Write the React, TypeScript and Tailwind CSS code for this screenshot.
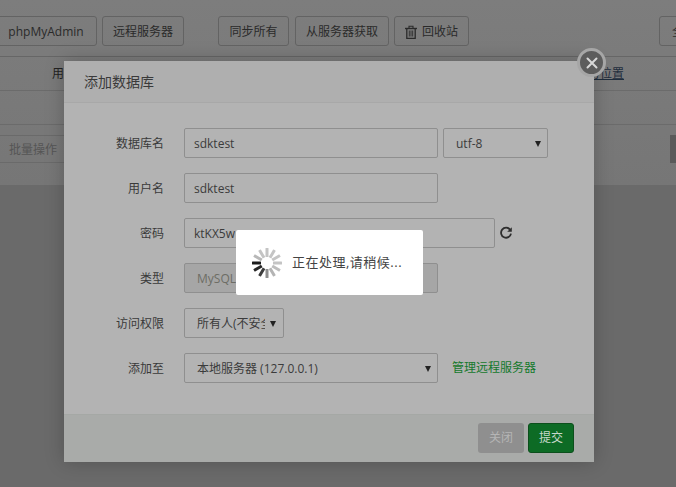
const font = { fontFamily: '"Open Sans", "Noto Sans CJK SC", sans-serif' };

const toolBtn =
  "flex h-[30px] shrink-0 items-center justify-center rounded-[3px] border border-[#636363] pt-px text-xs text-[#2a2a2a]";
const field =
  "flex h-[30px] items-center rounded-[2px] border border-[#8f8f8f] px-[9px] pt-px text-xs text-[#3b3b3b]";

function Caret({ className = "right-[6px]" }: { className?: string }) {
  return (
    <span className={`absolute top-[12px] h-0 w-0 border-x-[3.5px] border-t-[6px] border-x-transparent border-t-[#222] ${className}`} />
  );
}

function FormRow({ label, children }: { label: string; children: React.ReactNode }) {
  return (
    <div className="flex h-[30px] items-center">
      <label className="w-[100px] shrink-0 pt-[2px] text-right text-xs text-[#3a3a3a]">{label}</label>
      <div className="ml-[20px] flex items-center">{children}</div>
    </div>
  );
}

function TrashIcon() {
  return (
    <svg width="12" height="14" viewBox="0 0 12 14" className="shrink-0" fill="none" stroke="#2a2a2a">
      <path d="M0 3.5h12" strokeWidth="1.4" />
      <path d="M4 3V1.2h4V3" strokeWidth="1.1" />
      <path d="M1.8 3.5v9.8h8.4V3.5" strokeWidth="1.3" />
      <path d="M4.3 5.5v6M6 5.5v6M7.7 5.5v6" strokeWidth="0.9" />
    </svg>
  );
}

function RefreshIcon() {
  return (
    <svg width="14" height="14" viewBox="0 0 14 14" className="ml-[4px] shrink-0" fill="none">
      <path d="M11 3.6A5 5 0 1 0 12 7.6" stroke="#2e2e2e" strokeWidth="1.8" />
      <path d="M12.8 1.2v4.6H8.2z" fill="#2e2e2e" />
    </svg>
  );
}

function Spinner() {
  const colors = ["#1c1c1c", "#b8b8b8", "#c4c4c4", "#c4c4c4", "#c4c4c4", "#c4c4c4", "#c4c4c4", "#bdbdbd", "#b4b4b4", "#8e8e8e", "#3d3d3d", "#262626"];
  return (
    <svg width="32" height="32" viewBox="0 0 32 32" className="shrink-0">
      {colors.map((c, i) => (
        <rect key={i} x="1" y="14.5" width="9" height="3" rx="0.5" fill={c} transform={`rotate(${i * 30} 16 16)`} />
      ))}
    </svg>
  );
}

export default function App() {
  return (
    <div style={font} className="relative h-[487px] w-[676px] overflow-hidden bg-[#6a6a6a]">
      {/* page behind the dialog */}
      <div className="bg-gradient-to-b from-[#7d7d7d] to-[#767676]">
        <div className="flex h-[57px] items-start border-b border-[#666] pt-[16px]">
          <div className={`${toolBtn} ml-[-5px] w-[102px]`}>phpMyAdmin</div>
          <div className={`${toolBtn} ml-[5px] w-[82px]`}>远程服务器</div>
          <div className="ml-[18px] mt-[8px] h-[14px] w-px bg-[#6e6e6e]" />
          <div className={`${toolBtn} ml-[16px] w-[71px]`}>同步所有</div>
          <div className={`${toolBtn} ml-[6px] w-[94px]`}>从服务器获取</div>
          <div className={`${toolBtn} ml-[5px] w-[75px] gap-[5px]`}>
            <TrashIcon />
            回收站
          </div>
          <div className={`${toolBtn} ml-[190px] w-[40px] justify-start pl-[12px]`}>全</div>
        </div>
        <div className="flex h-[34px] items-center justify-between border-b border-[#6b6b6b] pl-[52px] pr-[52px] pt-px text-xs text-[#222]">
          <span>用</span>
          <span className="text-[#1f2d3d] underline">备份位置</span>
        </div>
        <div className="h-[34px] border-b border-[#6b6b6b]" />
        <div className="flex h-[60px] justify-between pt-[10px]">
          <div className="ml-[-4px] flex h-[28px] w-[80px] items-center rounded-[2px] border border-[#6a6a6a] pl-[12px] pt-px text-xs text-[#555]">
            批量操作
          </div>
          <div className="h-[28px] w-[6px] bg-[#5a5a5a]" />
        </div>
      </div>

      {/* dialog */}
      <div className="absolute left-[64px] top-[61px] flex h-[401px] w-[530px] flex-col bg-[#b3b3b3] shadow-[0_0_18px_rgba(0,0,0,0.22)]">
        <div className="flex h-[42px] shrink-0 items-center border-b border-[#a8a8a8] bg-[#afafaf] pl-[20px] text-sm text-[#3a3a3a]">
          添加数据库
        </div>
        <div className="flex flex-1 flex-col gap-[15px] pt-[25px]">
          <FormRow label="数据库名">
            <div className={`${field} w-[254px]`}>sdktest</div>
            <div className={`${field} relative ml-[5px] w-[105px] pl-[12px]`}>
              utf-8
              <Caret />
            </div>
          </FormRow>
          <FormRow label="用户名">
            <div className={`${field} w-[254px]`}>sdktest</div>
          </FormRow>
          <FormRow label="密码">
            <div className={`${field} w-[311px]`}>ktKX5w</div>
            <RefreshIcon />
          </FormRow>
          <FormRow label="类型">
            <div className={`${field} w-[254px] bg-[#a6a6a6] pl-[12px] text-[#6d6d65]`}>MySQL</div>
          </FormRow>
          <FormRow label="访问权限">
            <div className={`${field} relative w-[100px] whitespace-nowrap pl-[12px]`}>
              <span className="inline-block w-[68px] overflow-hidden">所有人(不安全)</span>
              <Caret className="right-[7px]" />
            </div>
          </FormRow>
          <FormRow label="添加至">
            <div className={`${field} relative w-[254px] pl-[12px]`}>
              本地服务器 (127.0.0.1)
              <Caret />
            </div>
            <span className="ml-[14px] text-xs text-[#15792c]">管理远程服务器</span>
          </FormRow>
        </div>
        <div className="flex h-[48px] shrink-0 items-start justify-end gap-[4px] border-t border-[#a5a8a5] bg-[#a9aba9] pr-[20px] pt-[8px]">
          <div className="flex h-[30px] w-[46px] items-center justify-center rounded-[3px] bg-[#8f8f8f] text-xs text-[#b5b5b5]">
            关闭
          </div>
          <div className="flex h-[30px] w-[46px] items-center justify-center rounded-[3px] border border-[#0c4f1c] bg-[#0d6b25] text-xs text-[#c8d8cb]">
            提交
          </div>
        </div>
      </div>

      {/* close badge */}
      <div className="absolute left-[577px] top-[48px] flex h-[29px] w-[29px] items-center justify-center rounded-full border-[3px] border-[#a6a6a6] bg-[#5c5c5c]">
        <svg width="14" height="14" viewBox="0 0 14 14">
          <path d="M2.5 2.5 11.5 11.5M11.5 2.5 2.5 11.5" stroke="#d8d8d8" strokeWidth="2" strokeLinecap="round" />
        </svg>
      </div>

      {/* loading toast */}
      <div className="absolute left-[236px] top-[230px] flex h-[65px] w-[187px] items-center gap-[9px] rounded-[2px] bg-white pl-[15px]">
        <Spinner />
        <span className="text-[13px] tracking-[0.5px] text-[#444]">正在处理,请稍候...</span>
      </div>
    </div>
  );
}
